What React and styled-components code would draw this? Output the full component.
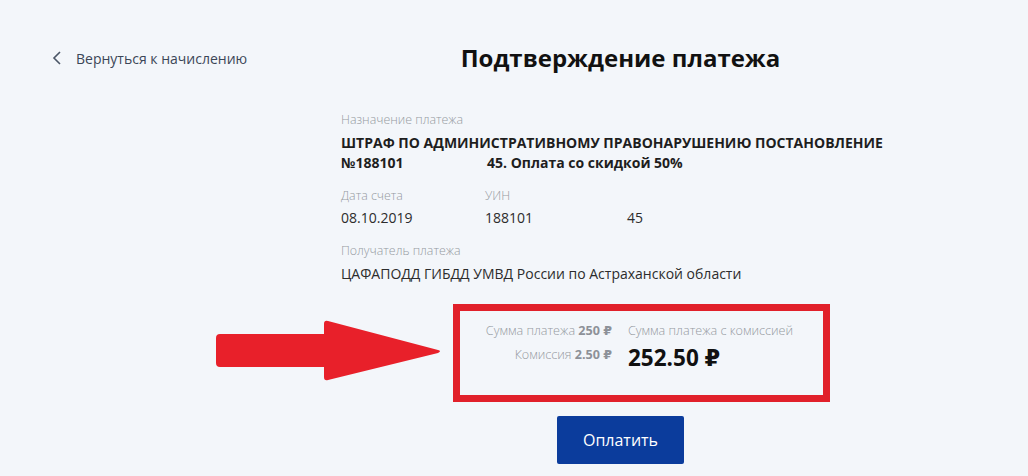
import React from "react";
import styled, { createGlobalStyle } from "styled-components";

const Global = createGlobalStyle`
  html, body { margin: 0; padding: 0; background: #f3f6fa; }
  body { font-family: "Open Sans", "DejaVu Sans", sans-serif; color: #1c1c1c; }
  #root { min-height: 476px; }
`;

const Page = styled.div`
  display: grid;
  grid-template-columns: 341px 559px 1fr;
  padding-top: 43px;
  min-height: 476px;
  box-sizing: border-box;
`;

const BackLink = styled.a`
  display: flex;
  align-items: center;
  gap: 14px;
  height: 30px;
  padding-left: 52px;
  font-size: 14px;
  color: #3b4657;
  text-decoration: none;
  cursor: pointer;
  align-self: start;
`;

const Main = styled.main`
  display: flex;
  flex-direction: column;
`;

const Title = styled.h1`
  margin: 0;
  height: 30px;
  line-height: 30px;
  text-align: center;
  font-size: 24px;
  font-weight: 700;
  color: #111;
`;

const Details = styled.section`
  display: flex;
  flex-direction: column;
  gap: 15px;
  margin-top: 39px;
`;

const Field = styled.div`
  display: flex;
  flex-direction: column;
  gap: ${(p) => p.$gap || 4}px;
`;

const Label = styled.div`
  font-size: 12.4px;
  line-height: 16px;
  font-weight: 300;
  color: #959aa1;
`;

const Value = styled.div`
  font-size: 14px;
  line-height: 20px;
  font-weight: ${(p) => (p.$bold ? 700 : 400)};
  color: ${(p) => (p.$bold ? "#1e1e1e" : "#2c2c2c")};
  white-space: pre;
`;

const FieldRow = styled.div`
  display: grid;
  grid-template-columns: 144px 142px auto;
`;

const SummaryRow = styled.div`
  position: relative;
  margin-top: 20px;
  margin-left: 112px;
  width: 377px;
`;

const Arrow = styled.svg`
  position: absolute;
  left: -237px;
  top: 16px;
`;

const SummaryBox = styled.div`
  box-sizing: border-box;
  height: 98px;
  border: 7px solid #e1202a;
  display: grid;
  grid-template-columns: 152px 1fr;
  column-gap: 16px;
  padding-top: 8px;
`;

const SumCol = styled.div`
  display: flex;
  flex-direction: column;
  align-items: ${(p) => (p.$right ? "flex-end" : "flex-start")};
`;

const SumLine = styled.div`
  font-size: 12.6px;
  line-height: 24px;
  font-weight: 300;
  color: #959aa1;
  white-space: nowrap;
  b { font-weight: 700; color: #8d9198; }
`;

const Total = styled.div`
  font-size: 22.5px;
  line-height: 30px;
  font-weight: 700;
  color: #111;
`;

const PayButton = styled.button`
  align-self: center;
  margin-top: 14px;
  width: 127px;
  height: 48px;
  border: none;
  border-radius: 2px;
  background: #0b3c9c;
  color: #fff;
  font-family: "Open Sans", sans-serif;
  font-size: 16px;
  cursor: pointer;
`;

export default function App() {
  return (
    <>
      <Global />
      <Page>
        <BackLink>
          <svg width="10" height="16" viewBox="0 0 10 16">
            <path d="M8 2 L2 8 L8 14" fill="none" stroke="#4a5566" strokeWidth="1.6" />
          </svg>
          Вернуться к начислению
        </BackLink>
        <Main>
          <Title>Подтверждение платежа</Title>
          <Details>
            <Field $gap={5}>
              <Label>Назначение платежа</Label>
              <Value $bold>
                {"ШТРАФ ПО АДМИНИСТРАТИВНОМУ ПРАВОНАРУШЕНИЮ ПОСТАНОВЛЕНИЕ\n№188101                       45. Оплата со скидкой 50%"}
              </Value>
            </Field>
            <FieldRow>
              <Field>
                <Label>Дата счета</Label>
                <Value>08.10.2019</Value>
              </Field>
              <Field>
                <Label>УИН</Label>
                <Value>188101</Value>
              </Field>
              <Field>
                <Label>&nbsp;</Label>
                <Value>45</Value>
              </Field>
            </FieldRow>
            <Field $gap={5}>
              <Label>Получатель платежа</Label>
              <Value>ЦАФАПОДД ГИБДД УМВД России по Астраханской области</Value>
            </Field>
          </Details>
          <SummaryRow>
            <Arrow width="228" height="62" viewBox="0 0 228 62">
              <path
                d="M4 14 L108 14 L108 4 Q108 0 112 1 L222 30 Q226 31 222 33 L112 60 Q108 61 108 57 L108 47 L4 47 Q0 47 0 43 L0 18 Q0 14 4 14 Z"
                fill="#e8202a"
              />
            </Arrow>
            <SummaryBox>
              <SumCol $right>
                <SumLine>Сумма платежа <b>250 ₽</b></SumLine>
                <SumLine>Комиссия <b>2.50 ₽</b></SumLine>
              </SumCol>
              <SumCol>
                <SumLine>Сумма платежа с комиссией</SumLine>
                <Total>252.50 ₽</Total>
              </SumCol>
            </SummaryBox>
          </SummaryRow>
          <PayButton>Оплатить</PayButton>
        </Main>
      </Page>
    </>
  );
}
